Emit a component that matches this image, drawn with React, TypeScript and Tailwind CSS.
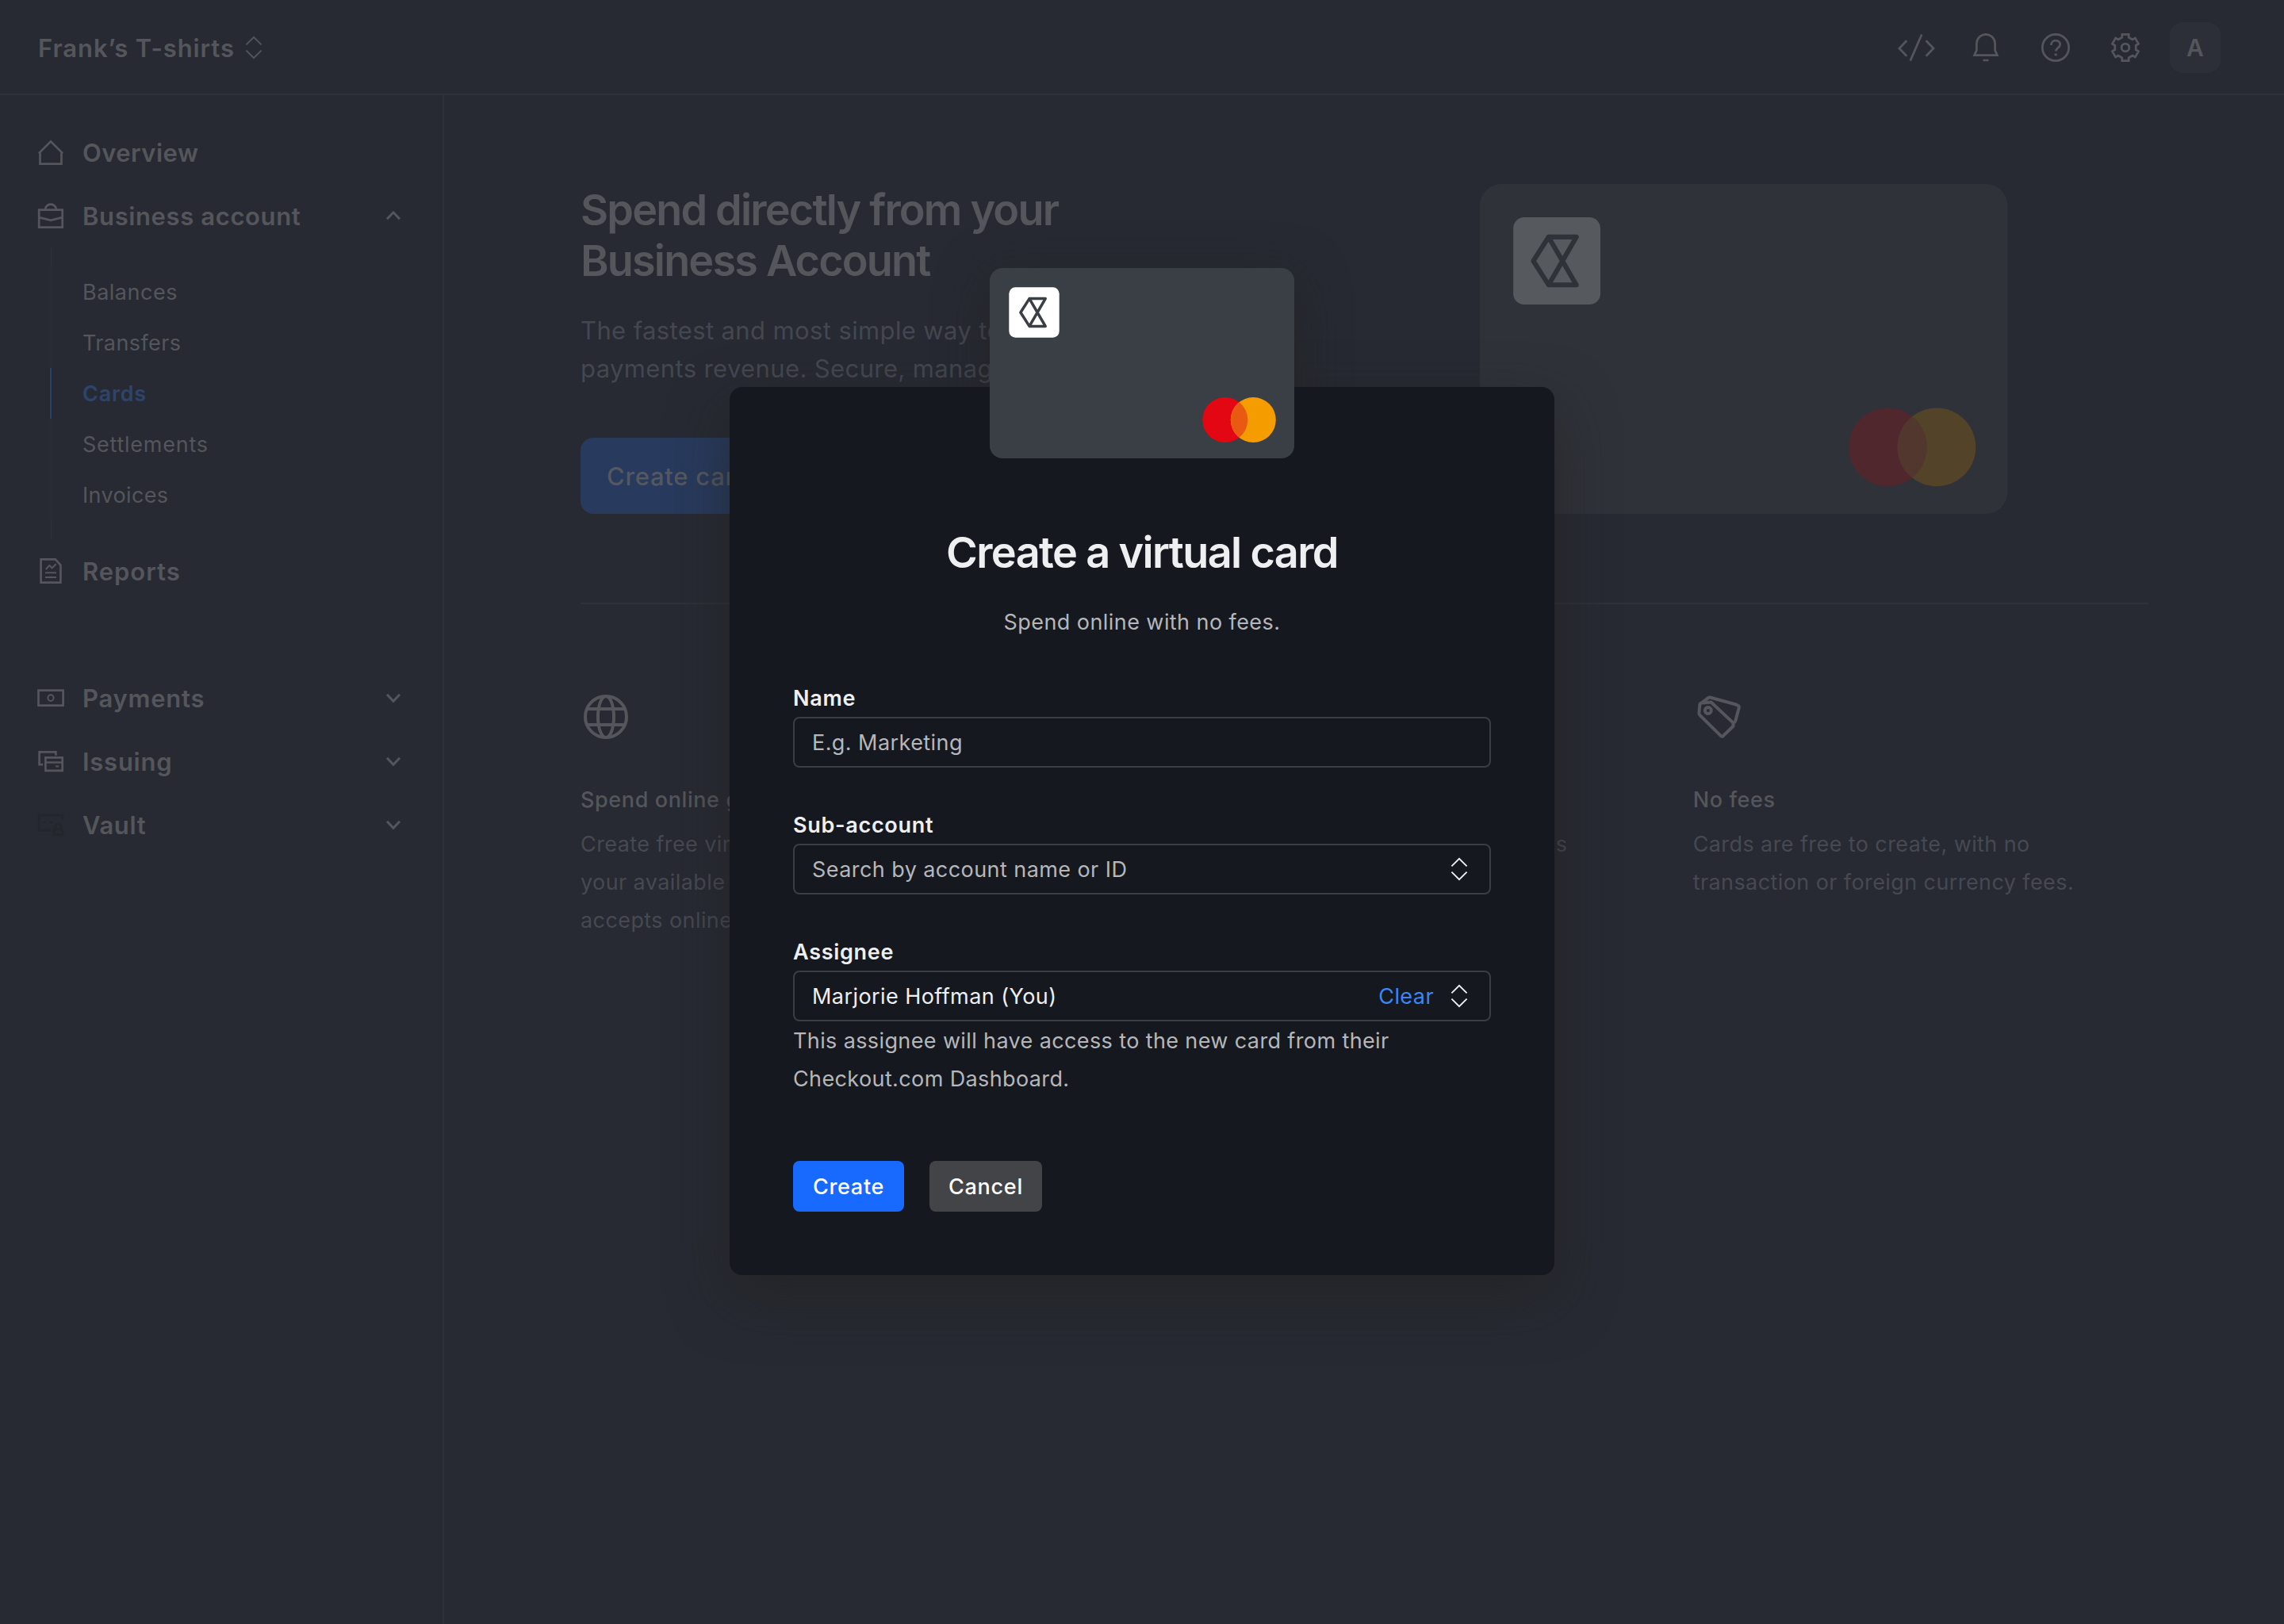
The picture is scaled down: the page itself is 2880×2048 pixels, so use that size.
import type { ReactNode } from "react";

function ChevronUpDown({ className = "" }: { className?: string }) {
  return (
    <svg viewBox="0 0 32 32" className={`size-8 shrink-0 ${className}`} fill="none" stroke="currentColor" strokeWidth="1.9">
      <path d="M6.4 12.4 16 2.8l9.6 9.6M6.4 19.6 16 29.2l9.6-9.6" />
    </svg>
  );
}

function Chevron({ up = false }: { up?: boolean }) {
  return (
    <svg viewBox="0 0 24 24" className="ml-auto size-6 shrink-0" fill="none" stroke="currentColor" strokeWidth="3">
      <path d={up ? "M4 16.2 12 7.8l8 8.4" : "M4 7.8l8 8.4 8-8.4"} />
    </svg>
  );
}

function NavIcon({ children, className = "" }: { children: ReactNode; className?: string }) {
  return (
    <svg viewBox="0 0 32 32" className={`size-8 shrink-0 overflow-visible ${className}`} fill="none" stroke="currentColor" strokeWidth="2.7">
      {children}
    </svg>
  );
}

const OverviewIcon = () => (
  <NavIcon>
    <path d="M.9 17.4 16 2.3l15.1 15.1M2.5 16v14.6h27V16" />
  </NavIcon>
);
const BusinessIcon = () => (
  <NavIcon>
    <path d="M1.2 8.7h29.5v21.9H1.2zM8.9 8.7a7.1 7.1 0 0 1 14.2 0M1.2 18.1 16 21.9l14.7-3.8" />
  </NavIcon>
);
const ReportsIcon = () => (
  <NavIcon>
    <path d="M3.6 1.4h18.2l6.6 7.2v22H3.6z" />
    <path strokeWidth="2" d="m9.8 14 4.6-5 3.2 3.3 5.1-5.1M9 18.3h14M9 24h14" />
  </NavIcon>
);
const PaymentsIcon = () => (
  <NavIcon>
    <path d="M.5 6.7h31.1v19H.5z" />
    <ellipse cx="16" cy="16.1" rx="3.6" ry="3.9" strokeWidth="2" />
  </NavIcon>
);
const IssuingIcon = () => (
  <NavIcon>
    <path d="M22.4 8.7V4.4H1.6v15.7H6M9.4 11.4h21.3v16.4H9.4zM9.4 17.5h21.3" />
    <path strokeWidth="2" d="M22 22.4h4.2" />
  </NavIcon>
);
const VaultIcon = () => (
  <NavIcon className="text-[#23262b]">
    <path d="M31 10V4H1.2v19.2H16M20 22h11v6.6H20zM22 22v-4a3.4 3.4 0 0 1 6.8 0v4" />
    <path strokeWidth="2" d="M5.6 13H10M14 13h4.6" />
  </NavIcon>
);

function NavRow({ icon, label, tracking = "tracking-[0.62px]", arrow }: { icon: ReactNode; label: string; tracking?: string; arrow?: "up" | "down" }) {
  return (
    <a className="flex h-20 items-center gap-6 pr-[50px] pl-12">
      {icon}
      <span className={`relative top-px text-[31px] leading-10 font-semibold ${tracking}`}>{label}</span>
      {arrow && <Chevron up={arrow === "up"} />}
    </a>
  );
}

function SubItem({ label, tracking = "tracking-[0.5px]", active = false }: { label: string; tracking?: string; active?: boolean }) {
  return (
    <a
      className={`ml-[63px] flex h-16 items-center border-l-2 pt-0.5 pl-[39px] text-[27px] ${tracking} ${
        active ? "border-[#2b4068] font-semibold text-[#2d446d]" : "border-[#292c33]"
      }`}
    >
      {label}
    </a>
  );
}

const gearTeeth = [0, 60, 120, 180, 240, 300]
  .flatMap((deg) => {
    const a = (deg * Math.PI) / 180;
    return [[-4.2, -12.8], [-4.2, -16.7], [4.2, -16.7], [4.2, -12.8]].map(
      ([x, y]) => `${(20 + x * Math.cos(a) - y * Math.sin(a)).toFixed(2)},${(20 + x * Math.sin(a) + y * Math.cos(a)).toFixed(2)}`
    );
  })
  .join(" ");

function Header() {
  return (
    <header className="flex h-[120px] items-center border-b-2 border-[#2e3139] pt-0.5 pr-20 pl-12">
      <span className="relative top-px text-[31px] leading-10 font-semibold tracking-[0.9px]">Frank’s T-shirts</span>
      <ChevronUpDown className="ml-2" />
      <svg viewBox="0 0 48 40" className="ml-auto h-10 w-12" fill="none" stroke="currentColor" strokeWidth="2.7">
        <path d="M12.3 11.3 2.9 21l9.4 9.7M31.2 3.5 16.8 36.6M36.6 11.3 46 21l-9.4 9.7" />
      </svg>
      <svg viewBox="0 0 40 40" className="ml-11 size-10" fill="none" stroke="currentColor" strokeWidth="2.7">
        <path d="M5.6 29.6 8.4 23.4V15a11.6 11.6 0 0 1 23.2 0v8.4l2.8 6.2zM16.5 36h7" />
      </svg>
      <svg viewBox="0 0 40 40" className="ml-12 size-10" fill="none" stroke="currentColor" strokeWidth="2.7">
        <circle cx="20" cy="20" r="16.7" />
        <path d="M14.4 17c0-3.6 2.3-5.8 5.6-5.8s5.7 2 5.7 5.1c0 3.5-5.4 4.2-5.4 8.3" />
        <path d="M18.6 28.9h3.2" />
      </svg>
      <svg viewBox="0 0 40 40" className="ml-12 size-10" fill="none" stroke="currentColor" strokeWidth="2.7">
        <polygon points={gearTeeth} />
        <circle cx="20" cy="20" r="4.9" />
      </svg>
      <div className="ml-9 flex size-16 items-center justify-center rounded-2xl bg-[#2c2f37] pt-px text-[30px] font-semibold">A</div>
    </header>
  );
}

function Sidebar() {
  return (
    <nav className="w-[560px] shrink-0 border-r-2 border-[#2e3139] pt-8">
      <NavRow icon={<OverviewIcon />} label="Overview" tracking="tracking-[0.45px]" />
      <NavRow icon={<BusinessIcon />} label="Business account" arrow="up" />
      <div className="ml-16 h-6 w-px bg-[#2e3139]" />
      <SubItem label="Balances" />
      <SubItem label="Transfers" tracking="tracking-[0.4px]" />
      <SubItem label="Cards" tracking="tracking-[0.75px]" active />
      <SubItem label="Settlements" tracking="tracking-[0.75px]" />
      <SubItem label="Invoices" tracking="tracking-[0.35px]" />
      <div className="ml-16 h-6 w-px bg-[#2e3139]" />
      <NavRow icon={<ReportsIcon />} label="Reports" tracking="tracking-[0.95px]" />
      <div className="mt-20">
        <NavRow icon={<PaymentsIcon />} label="Payments" tracking="tracking-[0.75px]" arrow="down" />
        <NavRow icon={<IssuingIcon />} label="Issuing" tracking="tracking-[0.75px]" arrow="down" />
        <NavRow icon={<VaultIcon />} label="Vault" arrow="down" />
      </div>
    </nav>
  );
}

interface CardColors {
  face: string;
  tile: string;
  left: string;
  right: string;
  overlap: string;
}

function CardArt({ colors, className }: { colors: CardColors; className: string }) {
  return (
    <svg viewBox="0 0 384 240" className={className}>
      <rect width="384" height="240" rx="16" fill={colors.face} />
      <rect x="24.3" y="24.3" width="63.4" height="63.4" rx="8" fill={colors.tile} />
      <path
        transform="translate(24 24)"
        d="M46.2 14.6H26L14.9 32 26 49.4h20.2L26 14.6M46.2 14.6 26 49.4"
        fill="none"
        stroke={colors.face}
        strokeWidth="3.5"
        strokeLinejoin="round"
        strokeLinecap="round"
      />
      <circle cx="296.8" cy="191.5" r="28.5" fill={colors.left} />
      <circle cx="332.3" cy="191.5" r="28.5" fill={colors.right} />
      <path d="M314.55 169.2a28.5 28.5 0 0 1 0 44.6a28.5 28.5 0 0 1 0-44.6z" fill={colors.overlap} />
    </svg>
  );
}

function Feature({ icon, title, lines }: { icon: ReactNode; title: string; lines: string[] }) {
  return (
    <section>
      {icon}
      <h2 className="mt-[49px] text-[27px] leading-[48px] font-medium tracking-[0.6px]">{title}</h2>
      <p className="mt-2 text-[27px] leading-[48px] tracking-[0.41px] text-[#464951]">
        {lines.map((line) => (
          <span key={line} className="block whitespace-nowrap">{line}</span>
        ))}
      </p>
    </section>
  );
}

function Main() {
  return (
    <main className="w-[2148px] pt-28 pl-[172px]">
      <div className="flex h-[416px] justify-between">
        <div>
          <h1 className="relative top-px text-[54px] leading-[64px] font-semibold tracking-[-1.83px]">
            Spend directly from your
            <br />
            Business Account
          </h1>
          <p className="mt-[33px] text-[31px] leading-[48px] tracking-[0.38px] text-[#44474f]">
            The fastest and most simple way to spend
            <br />
            payments revenue. Secure, manageable cards
          </p>
          <button className="mt-[63px] h-24 rounded-2xl bg-[#283a5d] px-[33px] text-[31px] font-medium tracking-[0.75px] text-[#55585f]">
            <span className="relative top-px">Create cards</span>
          </button>
        </div>
        <CardArt
          className="mr-44 h-[416px] w-[665.6px]"
          colors={{ face: "#2f3239", tile: "#56595d", left: "#50272d", right: "#534329", overlap: "#51372d" }}
        />
      </div>
      <hr className="mt-28 h-0.5 w-[1977px] border-0 bg-[#2e3139]" />
      <div className="mt-[110px] grid grid-cols-3 gap-32">
        <Feature
          icon={
            <svg viewBox="0 0 64 64" className="size-16" fill="none" stroke="currentColor" strokeWidth="4">
              <circle cx="32" cy="32" r="26" />
              <ellipse cx="32" cy="32" rx="10" ry="26" />
              <path d="M7.5 22h49M7.5 42h49" />
            </svg>
          }
          title="Spend online globally"
          lines={["Create free virtual cards to spend", "your available balance anywhere that", "accepts online card payments."]}
        />
        <Feature
          icon={
            <svg viewBox="0 0 64 64" className="size-16" fill="none" stroke="currentColor" strokeWidth="4">
              <rect x="6" y="14" width="52" height="36" rx="3" />
              <path d="M6 26h52" />
            </svg>
          }
          title="Stay in control"
          lines={["Set custom spend limits and freeze cards", "in real time, all in one place."]}
        />
        <Feature
          icon={
            <svg viewBox="0 0 64 64" className="size-16" fill="none" stroke="currentColor" strokeWidth="4" strokeLinejoin="round">
              <path d="M10.5 14.6 22.6 13.5 50.5 39.6V43.8L37.6 56.3Q36.3 57.3 35 56.1L8.4 29.8Q7.3 28.6 7.4 27L8.4 16.8Q8.7 14.8 10.5 14.6Z" />
              <path d="M10.5 14.6 19.3 7.8Q20.3 7.2 21.5 7.5L55 16.8Q58.3 17.8 57.7 20.8L53.4 36.8Q53 38.6 50.5 39.6" />
              <circle cx="18.8" cy="24" r="4" />
            </svg>
          }
          title="No fees"
          lines={["Cards are free to create, with no", "transaction or foreign currency fees."]}
        />
      </div>
    </main>
  );
}

const label = "relative top-px block text-[27px] leading-[48px] font-semibold tracking-[0.7px]";
const field = "flex h-16 items-center rounded-lg border-2 border-[#3a3d44] px-[22px] text-[27px] tracking-[0.43px]";

function CreateCardModal() {
  return (
    <div className="absolute inset-0 flex items-start justify-center pt-[488px]">
      <div className="relative flex h-[1120px] w-[1040px] flex-col rounded-2xl bg-[#15181f] px-20 pt-44 text-[#eeeff1] shadow-[0_28px_72px_rgba(34,34,34,0.6)]">
        <div className="absolute -top-[150px] left-[328px] rounded-2xl shadow-[0_16px_64px_rgba(34,34,34,0.6)]">
          <div className="absolute inset-x-0 top-[150px] bottom-0 -mx-20 -mb-24 bg-[#15181f]" />
          <CardArt
            className="relative block h-60 w-96"
            colors={{ face: "#3a3e45", tile: "#ffffff", left: "#e30613", right: "#f59c00", overlap: "#ea5911" }}
          />
        </div>
        <h1 className="relative top-px text-center text-[54px] leading-[64px] font-semibold tracking-[-1.64px]">Create a virtual card</h1>
        <p className="relative top-px mt-8 text-center text-[27px] leading-[48px] tracking-[0.43px] text-[#b5b7ba]">Spend online with no fees.</p>

        <div className="mt-12">
          <span className={label}>Name</span>
          <div className={`${field} text-[#b5b7ba]`}>
            <span className="relative top-px">E.g. Marketing</span>
          </div>
        </div>
        <div className="mt-12">
          <span className={label}>Sub-account</span>
          <div className={`${field} text-[#b5b7ba]`}>
            <span className="relative top-px">Search by account name or ID</span>
            <ChevronUpDown className="ml-auto text-[#eeeff1]" />
          </div>
        </div>
        <div className="mt-12">
          <span className={label}>Assignee</span>
          <div className={field}>
            <span className="relative top-px">Marjorie Hoffman (You)</span>
            <span className="relative top-px ml-auto text-[#3b87f7]">Clear</span>
            <ChevronUpDown className="ml-4" />
          </div>
          <p className="relative top-px text-[27px] leading-[48px] tracking-[0.38px] text-[#b5b7ba]">
            This assignee will have access to the new card from their
            <br />
            Checkout.com Dashboard.
          </p>
        </div>
        <div className="mt-20 flex gap-8 text-[27px] font-medium tracking-[0.7px] text-white">
          <button className="h-16 w-[140px] rounded-lg bg-[#186aff] pt-0.5">Create</button>
          <button className="h-16 w-[142px] rounded-lg bg-[#434448] pt-0.5">Cancel</button>
        </div>
      </div>
    </div>
  );
}

export default function App() {
  return (
    <div className="relative flex h-[2048px] w-[2880px] flex-col overflow-hidden bg-[#272a32] font-[Inter,sans-serif] text-[#54565b]">
      <Header />
      <div className="flex flex-1">
        <Sidebar />
        <Main />
      </div>
      <CreateCardModal />
    </div>
  );
}
